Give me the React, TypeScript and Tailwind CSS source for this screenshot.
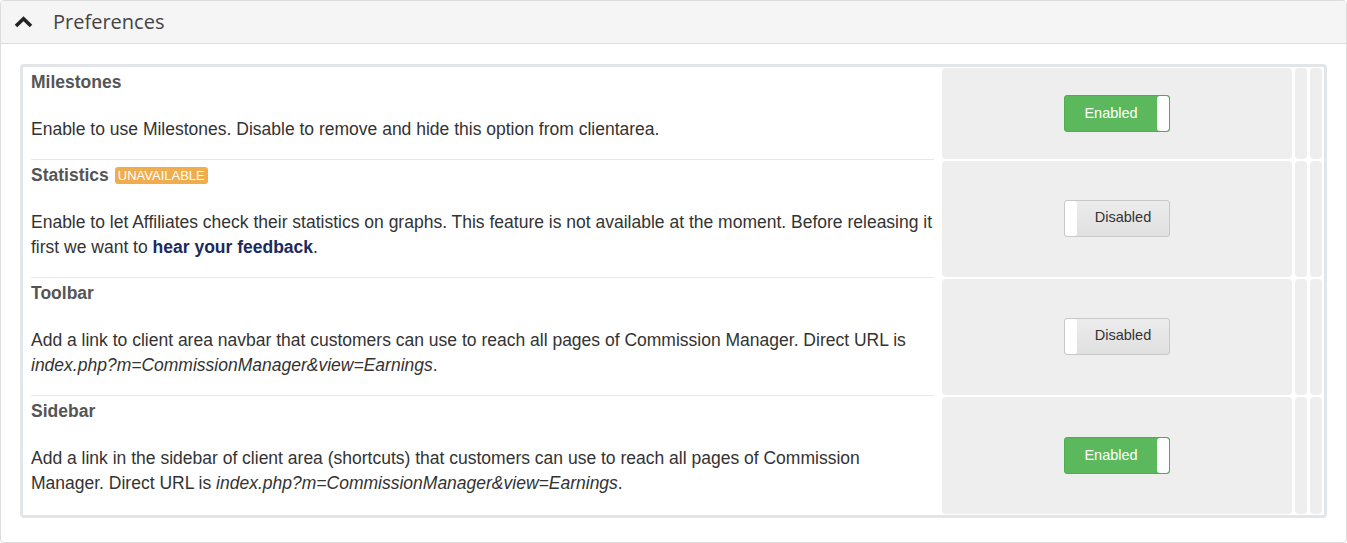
import React from 'react';

type Pref = {
  title: string;
  badge?: string;
  enabled: boolean;
  body: React.ReactNode;
};

const prefs: Pref[] = [
  {
    title: 'Milestones',
    enabled: true,
    body: <>Enable to use Milestones. Disable to remove and hide this option from clientarea.</>,
  },
  {
    title: 'Statistics',
    badge: 'UNAVAILABLE',
    enabled: false,
    body: (
      <>
        Enable to let Affiliates check their statistics on graphs. This feature is not available at the moment. Before
        releasing it first we want to <a className="font-bold text-[#1b2a5e]">hear your feedback</a>.
      </>
    ),
  },
  {
    title: 'Toolbar',
    enabled: false,
    body: (
      <>
        Add a link to client area navbar that customers can use to reach all pages of Commission Manager. Direct URL is{' '}
        <i className="whitespace-nowrap">index.php?m=CommissionManager&amp;view=Earnings</i>.
      </>
    ),
  },
  {
    title: 'Sidebar',
    enabled: true,
    body: (
      <>
        Add a link in the sidebar of client area (shortcuts) that customers can use to reach all pages of Commission
        Manager. Direct URL is <i className="whitespace-nowrap">index.php?m=CommissionManager&amp;view=Earnings</i>.
      </>
    ),
  },
];

function Toggle({ on }: { on: boolean }) {
  if (on) {
    return (
      <div className="flex h-[37px] w-[106px] overflow-hidden rounded-[3px] border border-[#4cae4c] bg-[#5cb85c]">
        <span className="flex flex-1 items-center justify-center text-[14.5px] text-white">Enabled</span>
        <span className="w-[12px] rounded-[3px] bg-white" />
      </div>
    );
  }
  return (
    <div className="flex h-[37px] w-[106px] overflow-hidden rounded-[3px] border border-[#c8c8c8] bg-gradient-to-b from-[#ececec] to-[#e0e0e0]">
      <span className="w-[12px] rounded-[3px] bg-white" />
      <span className="flex flex-1 items-center justify-center text-[14.5px] text-[#333]">Disabled</span>
    </div>
  );
}

export default function App() {
  return (
    <div className="h-[543px] w-[1347px] bg-white font-['Liberation_Sans',Arial,sans-serif]">
      <div className="h-[543px] overflow-hidden rounded-[4px] border border-[#dcdcdc]">
        <div className="flex h-[43px] items-center border-b border-[#dcdcdc] bg-[#f5f5f5]">
          <svg className="ml-[13px] h-[12px] w-[19px]" viewBox="0 0 19 12">
            <path d="M2 10 L9.5 2.8 L17 10" fill="none" stroke="#222" strokeWidth="3.6" strokeLinecap="butt" strokeLinejoin="miter" />
          </svg>
          <span className="ml-[20px] font-['Open_Sans',sans-serif] text-[20px] text-[#444]">Preferences</span>
        </div>
        <div className="px-[19px] pt-[20px]">
          <div className="rounded-[4px] border-[3px] border-[#e3e6e8] pr-[2px]">
            {prefs.map((p, i) => (
              <div key={p.title} className="flex">
                <div className="w-[917px] pl-[8px] pr-[6px]">
                  <div
                    className={`pt-[5px] pb-[17px] text-[17.5px] ${i < prefs.length - 1 ? 'border-b border-[#e8e8e8]' : 'pb-[19px]'}`}
                  >
                    <div className="flex h-[20px] items-center gap-[6px]">
                      <span className="font-bold text-[#555]">{p.title}</span>
                      {p.badge && (
                        <span className="rounded-[3px] bg-[#f0ad4e] px-[3px] text-[13px] leading-[17px] text-white">
                          {p.badge}
                        </span>
                      )}
                    </div>
                    <p className="mt-[25px] leading-[25px] text-[#333]">{p.body}</p>
                  </div>
                </div>
                <div className="ml-[2px] my-px flex w-[350px] items-center justify-center rounded-[4px] bg-[#eeeeee]">
                  <div className={i === 1 || i === 2 ? 'mb-[2px]' : ''}>
                    <Toggle on={p.enabled} />
                  </div>
                </div>
                <div className="ml-[3px] my-px w-[12px] rounded-[4px] bg-[#eeeeee]" />
                <div className="ml-[3px] my-px w-[12px] rounded-[4px] bg-[#eeeeee]" />
              </div>
            ))}
          </div>
        </div>
      </div>
    </div>
  );
}
